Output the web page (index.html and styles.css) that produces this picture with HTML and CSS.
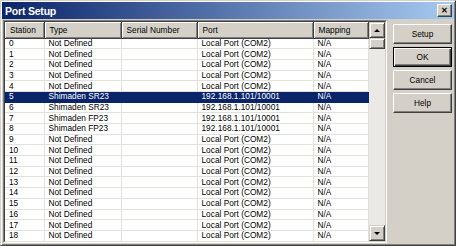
FILE: index.html
```html
<!DOCTYPE html>
<html lang="en">
<head>
    <meta charset="UTF-8">
    <title>Port Setup</title>
    <link rel="stylesheet" href="styles.css">
</head>
<body>
    <div class="dialog">
        <div class="titlebar">
            <span class="title">Port Setup</span>
            <span class="close">&#x2715;</span>
        </div>
        <div class="content">
            <div class="listview">
                <div class="list-inner">
                    <table class="grid">
                        <colgroup>
                            <col class="c-station">
                            <col class="c-type">
                            <col class="c-serial">
                            <col class="c-port">
                            <col class="c-map">
                        </colgroup>
                        <thead>
                            <tr>
                                <th>Station</th>
                                <th>Type</th>
                                <th>Serial Number</th>
                                <th>Port</th>
                                <th>Mapping</th>
                            </tr>
                        </thead>
                        <tbody id="rows"></tbody>
                    </table>
                    <div class="scrollbar">
                        <div class="sb-btn"><span class="arrow up"></span></div>
                        <div class="sb-thumb"></div>
                        <div class="sb-track"></div>
                        <div class="sb-btn"><span class="arrow down"></span></div>
                    </div>
                </div>
            </div>
            <div class="buttons">
                <button class="btn">Setup</button>
                <button class="btn default">OK</button>
                <button class="btn">Cancel</button>
                <button class="btn">Help</button>
            </div>
        </div>
    </div>

    <script>
        const stations = [
            ['Not Defined', 'Local Port (COM2)'],
            ['Not Defined', 'Local Port (COM2)'],
            ['Not Defined', 'Local Port (COM2)'],
            ['Not Defined', 'Local Port (COM2)'],
            ['Not Defined', 'Local Port (COM2)'],
            ['Shimaden SR23', '192.168.1.101/10001'],
            ['Shimaden SR23', '192.168.1.101/10001'],
            ['Shimaden FP23', '192.168.1.101/10001'],
            ['Shimaden FP23', '192.168.1.101/10001']
        ];
        for (let i = 9; i <= 18; i++) {
            stations.push(['Not Defined', 'Local Port (COM2)']);
        }

        const tbody = document.getElementById('rows');
        stations.forEach((s, i) => {
            const tr = document.createElement('tr');
            if (i === 5) tr.classList.add('selected');
            tr.innerHTML = `<td>${i}</td><td>${s[0]}</td><td></td><td>${s[1]}</td><td>N/A</td>`;
            tbody.appendChild(tr);
        });
    </script>
</body>
</html>
```

FILE: styles.css
```css
* {
    box-sizing: border-box;
    margin: 0;
    padding: 0;
}

body {
    width: 456px;
    height: 246px;
    overflow: hidden;
    background: #d4d0c8;
    font-family: 'Liberation Sans', Arial, sans-serif;
}

.dialog {
    width: 456px;
    height: 246px;
    display: flex;
    flex-direction: column;
    background: #d4d0c8;
    border: 1px solid;
    border-color: #d4d0c8 #404040 #404040 #d4d0c8;
    box-shadow: inset 1px 1px 0 #fff, inset -1px -1px 0 #808080;
}

.titlebar {
    height: 18px;
    margin: 1px 1px 0 1px;
    display: flex;
    align-items: center;
    justify-content: space-between;
    padding: 0 2px 0 3px;
    background: linear-gradient(to right, #0a246a, #a6caf0);
}

.title {
    color: #fff;
    font-weight: bold;
    font-size: 10.5px;
    letter-spacing: -0.2px;
}

.close {
    width: 15px;
    height: 13px;
    background: #d4d0c8;
    border: 1px solid;
    border-color: #fff #404040 #404040 #fff;
    box-shadow: inset -1px -1px 0 #808080;
    font-size: 8px;
    font-weight: bold;
    line-height: 11px;
    text-align: center;
    color: #000;
}

.content {
    flex: 1;
    display: flex;
    padding: 1px 3px 2px 2px;
}

.listview {
    width: 384px;
    height: 223px;
    border: 1px solid;
    border-color: #808080 #fff #fff #808080;
}

.list-inner {
    height: 100%;
    display: flex;
    border: 1px solid;
    border-color: #404040 #d4d0c8 #d4d0c8 #404040;
    background: #fff;
}

.grid {
    width: 363px;
    border-collapse: collapse;
    table-layout: fixed;
    font-size: 8.3px;
    color: #000;
    align-self: flex-start;
}

.c-station { width: 39px; }
.c-type { width: 77px; }
.c-serial { width: 76px; }
.c-port { width: 116px; }
.c-map { width: 55px; }

.grid th {
    height: 16px;
    font-weight: normal;
    text-align: left;
    padding: 0 0 0 5px;
    background: #d4d0c8;
    border-right: 1px solid #404040;
    box-shadow: inset 1px 1px 0 #fff, inset -1px -1px 0 #808080;
    border-bottom: 1px solid #404040;
    white-space: nowrap;
    overflow: hidden;
}

.grid td {
    height: 10.7px;
    line-height: 9px;
    padding: 0 0 0 4px;
    border-right: 1px solid #e2e0da;
    border-bottom: 1px solid #e2e0da;
    white-space: nowrap;
    overflow: hidden;
}

.grid tr.selected td {
    background: #0a246a;
    color: #fff;
    border-color: #0a246a;
}

.scrollbar {
    width: 16px;
    margin-left: auto;
    display: flex;
    flex-direction: column;
}

.sb-btn {
    height: 16px;
    background: #d4d0c8;
    border: 1px solid;
    border-color: #d4d0c8 #404040 #404040 #d4d0c8;
    box-shadow: inset 1px 1px 0 #fff, inset -1px -1px 0 #808080;
    display: flex;
    align-items: center;
    justify-content: center;
}

.sb-thumb {
    height: 11px;
    background: #d4d0c8;
    border: 1px solid;
    border-color: #d4d0c8 #404040 #404040 #d4d0c8;
    box-shadow: inset 1px 1px 0 #fff, inset -1px -1px 0 #808080;
}

.sb-track {
    flex: 1;
    background: #ebe9e6;
}

.arrow {
    width: 0;
    height: 0;
    border-left: 3px solid transparent;
    border-right: 3px solid transparent;
}

.arrow.up {
    border-bottom: 3px solid #000;
}

.arrow.down {
    border-top: 3px solid #000;
}

.buttons {
    margin-left: 6px;
    padding-top: 4px;
    display: flex;
    flex-direction: column;
    gap: 3px;
}

.btn {
    width: 59px;
    height: 20px;
    background: #d4d0c8;
    border: 1px solid;
    border-color: #fff #404040 #404040 #fff;
    box-shadow: inset -1px -1px 0 #808080;
    font-family: 'Liberation Sans', Arial, sans-serif;
    font-size: 8.3px;
    color: #000;
}

.btn.default {
    border: 1px solid #000;
    box-shadow: inset 1px 1px 0 #fff, inset -1px -1px 0 #404040, inset -2px -2px 0 #808080;
}
```
